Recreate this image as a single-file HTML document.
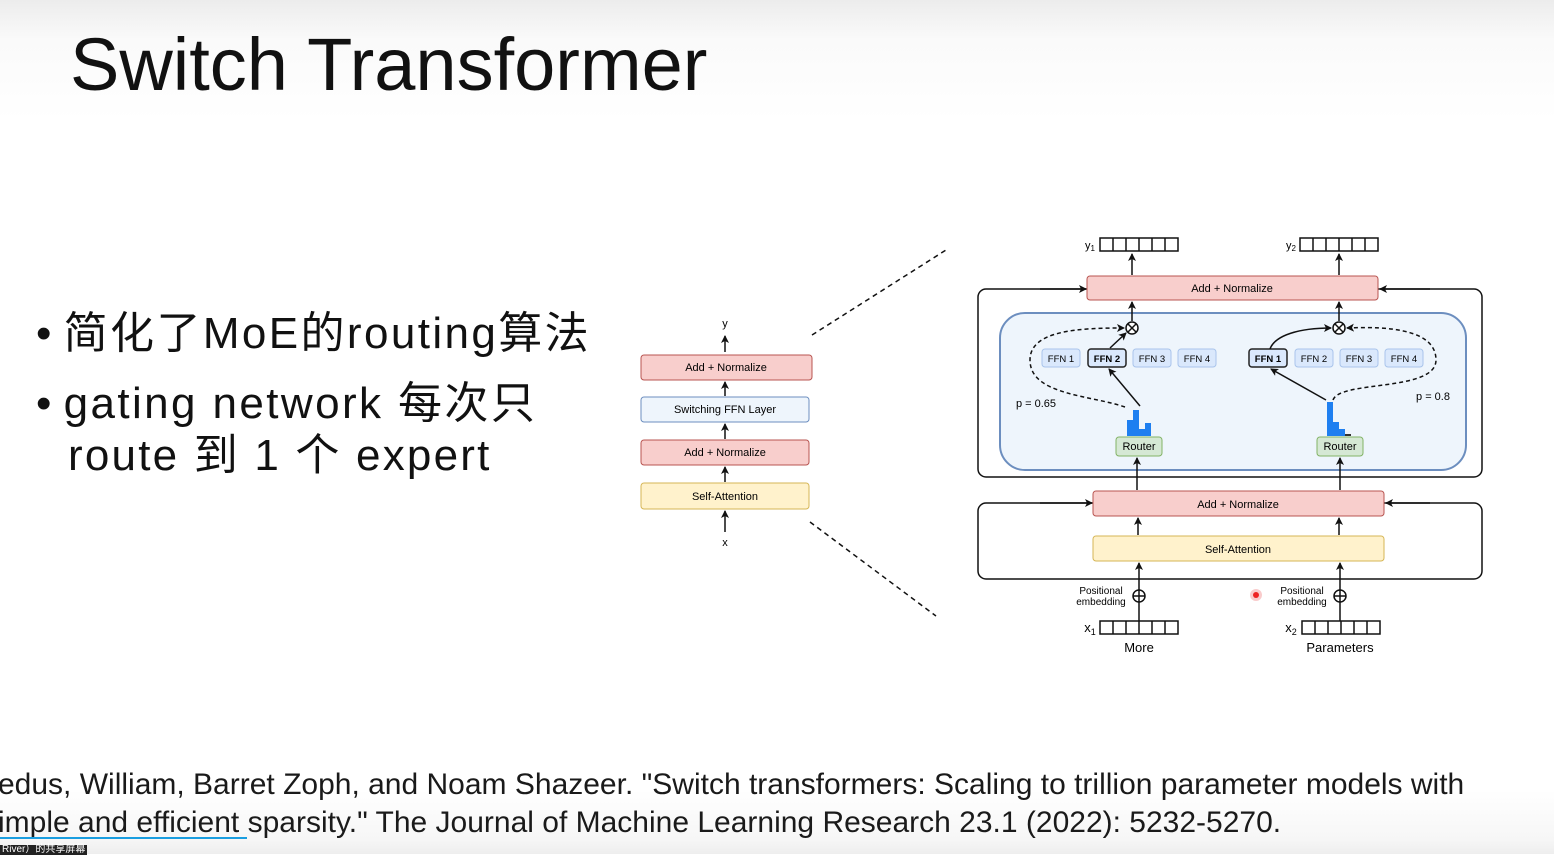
<!DOCTYPE html>
<html><head><meta charset="utf-8"><style>
body{margin:0;width:1554px;height:854px;overflow:hidden;background:#fff;font-family:"Liberation Sans","Noto Sans CJK SC",sans-serif;}
.bg{position:absolute;left:0;top:0;width:1554px;height:854px;background:linear-gradient(#ececec 0px,#fafafa 40px,#fff 120px,#fff 790px,#f6f6f6 840px,#eee 854px);}
.t{position:absolute;white-space:nowrap;color:#111;}
</style></head><body>
<div class="bg"></div>
<div class="t" style="left:70px;top:22px;font-size:74px;">Switch Transformer</div>
<div class="t" style="left:36px;top:306px;font-size:44px;line-height:56px;">•&nbsp;<span style="letter-spacing:2.4px">简化了MoE的routing算法</span></div>
<div class="t" style="left:36px;top:378px;font-size:44px;line-height:52px;">•&nbsp;<span style="letter-spacing:2.4px">gating network 每次只</span></div>
<div class="t" style="left:68px;top:430px;font-size:44px;line-height:52px;letter-spacing:2.2px">route 到 1 个 expert</div>
<div class="t" style="left:-2px;top:766px;font-size:30px;line-height:38px;color:#1a1a1a;">edus, William, Barret Zoph, and Noam Shazeer. "Switch transformers: Scaling to trillion parameter models with<br>imple and efficient sparsity." The Journal of Machine Learning Research 23.1 (2022): 5232-5270.</div>
<div style="position:absolute;left:0;top:837px;width:247px;height:2px;background:#1a9ee0"></div>
<div class="t" style="left:0;top:845px;background:#222;color:#fff;font-size:10px;line-height:10px;padding:0 2px;">River）的共享屏幕</div>
<svg width="1554" height="854" style="position:absolute;left:0;top:0" font-family="Liberation Sans,sans-serif">
<defs><marker id="a" markerWidth="8" markerHeight="8" refX="7" refY="4" orient="auto" markerUnits="userSpaceOnUse"><path d="M0,0 L8,4 L0,8 L2,4z" fill="#111"/></marker></defs>
<g stroke="#111" stroke-width="1.5" fill="none">
<line x1="725" y1="352" x2="725" y2="336" marker-end="url(#a)"/>
<line x1="725" y1="396" x2="725" y2="382" marker-end="url(#a)"/>
<line x1="725" y1="439" x2="725" y2="424" marker-end="url(#a)"/>
<line x1="725" y1="482" x2="725" y2="467" marker-end="url(#a)"/>
<line x1="725" y1="532" x2="725" y2="511" marker-end="url(#a)"/>
<line x1="812" y1="335" x2="946" y2="250" stroke-dasharray="5,4"/>
<line x1="810" y1="522" x2="936" y2="616" stroke-dasharray="5,4"/>
<path d="M1087,289 H986 a8,8 0 0 0 -8,8 V469 a8,8 0 0 0 8,8 H1474 a8,8 0 0 0 8,-8 V297 a8,8 0 0 0 -8,-8 H1378"/>
<line x1="1040" y1="289" x2="1086" y2="289" marker-end="url(#a)"/>
<line x1="1430" y1="289" x2="1380" y2="289" marker-end="url(#a)"/>
<path d="M1093,503 H986 a8,8 0 0 0 -8,8 V571 a8,8 0 0 0 8,8 H1474 a8,8 0 0 0 8,-8 V511 a8,8 0 0 0 -8,-8 H1384"/>
<line x1="1040" y1="503" x2="1092" y2="503" marker-end="url(#a)"/>
<line x1="1430" y1="503" x2="1386" y2="503" marker-end="url(#a)"/>
</g>
<rect x="1000" y="313" width="466" height="157" rx="25" fill="#eef5fc" stroke="#6c8ebf" stroke-width="2"/>
<g font-size="11" text-anchor="middle">
<rect x="641" y="355" width="171" height="25" rx="3" fill="#f8cecc" stroke="#b85450"/><text x="726" y="371">Add + Normalize</text>
<rect x="641" y="397" width="168" height="25" rx="3" fill="#eef5fc" stroke="#6c8ebf"/><text x="725" y="413">Switching FFN Layer</text>
<rect x="641" y="440" width="168" height="25" rx="3" fill="#f8cecc" stroke="#b85450"/><text x="725" y="456">Add + Normalize</text>
<rect x="641" y="483" width="168" height="26" rx="3" fill="#fff2cc" stroke="#d6b656"/><text x="725" y="500">Self-Attention</text>
<text x="725" y="327">y</text><text x="725" y="546">x</text>
<rect x="1087" y="276" width="291" height="24" rx="3" fill="#f8cecc" stroke="#b85450"/><text x="1232" y="292">Add + Normalize</text>
<rect x="1093" y="491" width="291" height="25" rx="3" fill="#f8cecc" stroke="#b85450"/><text x="1238" y="508">Add + Normalize</text>
<rect x="1093" y="536" width="291" height="25" rx="3" fill="#fff2cc" stroke="#d6b656"/><text x="1238" y="553">Self-Attention</text>
<g font-size="9.5">
<rect x="1042" y="349" width="38" height="18" rx="3" fill="#dae8fc" stroke="#a9c4eb"/><text x="1061" y="362">FFN 1</text>
<rect x="1088" y="349" width="38" height="18" rx="3" fill="#dae8fc" stroke="#222" stroke-width="1.5"/><text x="1107" y="362" font-weight="bold">FFN 2</text>
<rect x="1133" y="349" width="38" height="18" rx="3" fill="#dae8fc" stroke="#a9c4eb"/><text x="1152" y="362">FFN 3</text>
<rect x="1178" y="349" width="38" height="18" rx="3" fill="#dae8fc" stroke="#a9c4eb"/><text x="1197" y="362">FFN 4</text>
<rect x="1249" y="349" width="38" height="18" rx="3" fill="#dae8fc" stroke="#222" stroke-width="1.5"/><text x="1268" y="362" font-weight="bold">FFN 1</text>
<rect x="1295" y="349" width="38" height="18" rx="3" fill="#dae8fc" stroke="#a9c4eb"/><text x="1314" y="362">FFN 2</text>
<rect x="1340" y="349" width="38" height="18" rx="3" fill="#dae8fc" stroke="#a9c4eb"/><text x="1359" y="362">FFN 3</text>
<rect x="1385" y="349" width="38" height="18" rx="3" fill="#dae8fc" stroke="#a9c4eb"/><text x="1404" y="362">FFN 4</text>
</g>
<rect x="1116" y="437" width="46" height="19" rx="3" fill="#d5e8d4" stroke="#82b366"/><text x="1139" y="450">Router</text>
<rect x="1317" y="437" width="46" height="19" rx="3" fill="#d5e8d4" stroke="#82b366"/><text x="1340" y="450">Router</text>
<text x="1036" y="407">p = 0.65</text><text x="1433" y="400">p = 0.8</text>
<text x="1101" y="594" font-size="10">Positional</text><text x="1101" y="605" font-size="10">embedding</text>
<text x="1302" y="594" font-size="10">Positional</text><text x="1302" y="605" font-size="10">embedding</text>
<text x="1139" y="652" font-size="13">More</text><text x="1340" y="652" font-size="13">Parameters</text>
<text x="1090" y="249">y<tspan font-size="8" dy="2">1</tspan></text>
<text x="1291" y="249">y<tspan font-size="8" dy="2">2</tspan></text>
<text x="1090" y="632" font-size="13">x<tspan font-size="9" dy="3">1</tspan></text>
<text x="1291" y="632" font-size="13">x<tspan font-size="9" dy="3">2</tspan></text>
</g>
<g fill="#1e7ff0">
<rect x="1127" y="420" width="6" height="16"/><rect x="1133" y="410" width="6" height="26"/><rect x="1139" y="429" width="6" height="7"/><rect x="1145" y="423" width="6" height="13"/>
<rect x="1327" y="402" width="6" height="34"/><rect x="1333" y="422" width="6" height="14"/><rect x="1339" y="429" width="6" height="7"/><rect x="1345" y="434" width="6" height="2" fill="#333"/>
</g>
<g stroke="#111" stroke-width="1.5" fill="none">
<g id="tok"><rect x="1100" y="238" width="78" height="13"/><path d="M1113,238v13M1126,238v13M1139,238v13M1152,238v13M1165,238v13"/></g>
<use href="#tok" x="200"/><use href="#tok" y="383"/><use href="#tok" x="202" y="383"/>
<line x1="1132" y1="275" x2="1132" y2="254" marker-end="url(#a)"/>
<line x1="1339" y1="275" x2="1339" y2="254" marker-end="url(#a)"/>
<line x1="1132" y1="321" x2="1132" y2="302" marker-end="url(#a)"/>
<line x1="1339" y1="321" x2="1339" y2="302" marker-end="url(#a)"/>
<circle cx="1132" cy="328" r="6" fill="#fff"/><path d="M1128,324l8,8M1136,324l-8,8"/>
<circle cx="1339" cy="328" r="6" fill="#fff"/><path d="M1335,324l8,8M1343,324l-8,8"/>
<line x1="1110" y1="348" x2="1126" y2="333" marker-end="url(#a)"/>
<line x1="1140" y1="406" x2="1109" y2="369" marker-end="url(#a)"/>
<line x1="1326" y1="400" x2="1271" y2="369" marker-end="url(#a)"/>
<path d="M1270,349 C1275,335 1300,328 1331,328" marker-end="url(#a)"/>
<path d="M1125,407 C1090,395 1030,395 1030,360 C1030,330 1080,328 1124,328" stroke-dasharray="4,3" marker-end="url(#a)"/>
<path d="M1333,400 C1340,380 1436,392 1436,360 C1436,330 1390,326 1347,328" stroke-dasharray="4,3" marker-end="url(#a)"/>
<line x1="1137" y1="490" x2="1137" y2="458" marker-end="url(#a)"/>
<line x1="1340" y1="490" x2="1340" y2="458" marker-end="url(#a)"/>
<line x1="1138" y1="535" x2="1138" y2="518" marker-end="url(#a)"/>
<line x1="1339" y1="535" x2="1339" y2="518" marker-end="url(#a)"/>
<line x1="1139" y1="621" x2="1139" y2="563" marker-end="url(#a)"/>
<line x1="1340" y1="621" x2="1340" y2="563" marker-end="url(#a)"/>
<circle cx="1139" cy="596" r="6" fill="#fff"/><path d="M1133,596h12M1139,590v12"/>
<circle cx="1340" cy="596" r="6" fill="#fff"/><path d="M1334,596h12M1340,590v12"/>
</g>
<circle cx="1256" cy="595" r="6" fill="#f6b5b5" opacity=".7"/><circle cx="1256" cy="595" r="3" fill="#e22"/>
</svg>
</body></html>
